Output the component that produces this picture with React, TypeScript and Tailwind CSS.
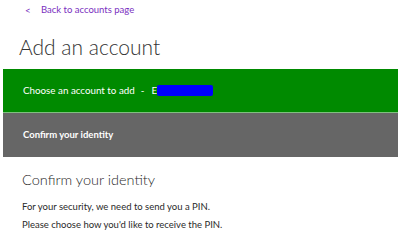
export default function App() {
  return (
    <div className="w-[399px] h-[248px] overflow-hidden bg-white font-['Lato',sans-serif]">
      <div className="flex items-center h-[20px] pl-[25px] text-[9.5px] text-[#7a2fc0]">
        <span className="w-[16px] text-[10px]">&lt;</span>
        <span>Back to accounts page</span>
      </div>
      <h1 className="pl-[19px] pt-[13px] h-[49px] text-[21px] font-light text-[#333] leading-[28px]">
        Add an account
      </h1>
      <div className="ml-[3px] mr-[1px] h-[44px] bg-[#008a00] flex items-center pl-[20px] text-[9.8px] text-white border-b border-[#7fbf7f]">
        <span>Choose an account to add</span>
        <span className="ml-[6px]">-</span>
        <span className="ml-[7px]">E</span>
        <span className="inline-block w-[56px] h-[11px] bg-[#0000ff] rounded-[2px]" />
      </div>
      <div className="ml-[3px] mr-[1px] h-[44px] bg-[#666666] flex items-center pl-[20px] text-[9.5px] font-bold text-white">
        Confirm your identity
      </div>
      <div className="pl-[22px] pt-[12px] text-[#2a2a2a]">
        <div className="text-[14.5px] font-light leading-[22px]">Confirm your identity</div>
        <div className="mt-[7px] text-[9.5px] leading-[18px]">For your security, we need to send you a PIN.</div>
        <div className="text-[9.5px] leading-[18px]">Please choose how you'd like to receive the PIN.</div>
      </div>
    </div>
  )
}
